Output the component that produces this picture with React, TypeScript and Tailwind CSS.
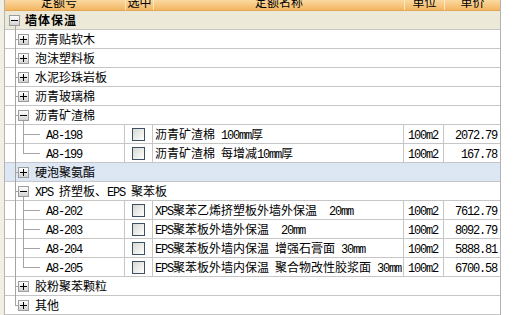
import React from "react";

const ASCII = /^[\x00-\x7f]+$/;

function Txt({ s }: { s: string }) {
  const parts = s.match(/[\x00-\x7f]+|[^\x00-\x7f]+/g) || [];
  return (
    <>
      {parts.map((p, i) =>
        ASCII.test(p) ? (
          <span
            key={i}
            className="font-['Liberation_Mono',monospace] text-[12px] tracking-[-1.2px] whitespace-pre"
          >
            {p}
          </span>
        ) : (
          <span key={i}>{p}</span>
        )
      )}
    </>
  );
}

type Row = {
  kind: "root" | "group" | "leaf";
  label?: string;
  expanded?: boolean;
  code?: string;
  name?: string;
  unit?: string;
  price?: string;
  last?: boolean;
  lastLeaf?: boolean;
  highlight?: boolean;
};

const rows: Row[] = [
  { kind: "root", label: "墙体保温", expanded: true },
  { kind: "group", label: "沥青贴软木" },
  { kind: "group", label: "泡沫塑料板" },
  { kind: "group", label: "水泥珍珠岩板" },
  { kind: "group", label: "沥青玻璃棉" },
  { kind: "group", label: "沥青矿渣棉", expanded: true },
  { kind: "leaf", code: "A8-198", name: "沥青矿渣棉 100mm厚", unit: "100m2", price: "2072.79" },
  { kind: "leaf", code: "A8-199", name: "沥青矿渣棉 每增减10mm厚", unit: "100m2", price: "167.78", lastLeaf: true },
  { kind: "group", label: "硬泡聚氨酯", highlight: true },
  { kind: "group", label: "XPS 挤塑板、EPS 聚苯板", expanded: true },
  { kind: "leaf", code: "A8-202", name: "XPS聚苯乙烯挤塑板外墙外保温  20mm", unit: "100m2", price: "7612.79" },
  { kind: "leaf", code: "A8-203", name: "EPS聚苯板外墙外保温  20mm", unit: "100m2", price: "8092.79" },
  { kind: "leaf", code: "A8-204", name: "EPS聚苯板外墙内保温 增强石膏面 30mm", unit: "100m2", price: "5888.81" },
  { kind: "leaf", code: "A8-205", name: "EPS聚苯板外墙内保温 聚合物改性胶浆面 30mm", unit: "100m2", price: "6700.58", lastLeaf: true },
  { kind: "group", label: "胶粉聚苯颗粒" },
  { kind: "group", label: "其他", last: true },
];

function Toggle({ open, left }: { open: boolean; left: string }) {
  return (
    <div
      className={`absolute top-[4px] ${left} w-[11px] h-[11px] border border-[#9c9c9c] bg-gradient-to-b from-white to-[#d2d2d2]`}
    >
      <div className="absolute left-[1px] top-[4px] w-[7px] h-[1px] bg-black" />
      {!open && <div className="absolute left-[4px] top-[1px] w-[1px] h-[7px] bg-black" />}
    </div>
  );
}

function Check() {
  return (
    <div className="mt-[3px] ml-[7px] w-[13px] h-[13px] border border-[#3b4f66] bg-gradient-to-br from-[#d8d8d2] to-white" />
  );
}

function TreeRow({ r }: { r: Row }) {
  const bg = r.kind === "root" ? "bg-[#ece9d8]" : r.highlight ? "bg-[#dde6f3]" : "bg-white";
  return (
    <div className={`relative flex h-[19px] border-b border-[#c6c6c6] ${bg} leading-[18px] text-[12px] text-black`}>
      {r.kind === "root" && (
        <div className="absolute left-[10px] top-[15px] bottom-[-1px] w-[1px] bg-[#a4a4a4]" />
      )}
      {r.kind !== "root" && !r.last && (
        <div className="absolute left-[10px] top-0 bottom-[-1px] w-[1px] bg-[#a4a4a4]" />
      )}
      {r.last && <div className="absolute left-[10px] top-0 h-[10px] w-[1px] bg-[#a4a4a4]" />}

      {r.kind === "root" && (
        <>
          <Toggle open left="left-[4px]" />
          <div className="pl-[20px] font-bold tracking-[1px]">{r.label}</div>
        </>
      )}

      {r.kind === "group" && (
        <>
          <div className="absolute left-[10px] top-[9px] w-[3px] h-[1px] bg-[#a4a4a4]" />
          <Toggle open={!!r.expanded} left="left-[13px]" />
          {r.expanded && (
            <div className="absolute left-[18px] top-[15px] bottom-[-1px] w-[1px] bg-[#a4a4a4]" />
          )}
          <div className="pl-[30px] whitespace-pre">
            <Txt s={r.label || ""} />
          </div>
        </>
      )}

      {r.kind === "leaf" && (
        <>
          {r.lastLeaf ? (
            <div className="absolute left-[18px] top-0 h-[10px] w-[1px] bg-[#a4a4a4]" />
          ) : (
            <div className="absolute left-[18px] top-0 bottom-[-1px] w-[1px] bg-[#a4a4a4]" />
          )}
          <div className="absolute left-[18px] top-[9px] w-[17px] h-[1px] bg-[#a4a4a4]" />
          <div className="w-[120px] shrink-0 border-r border-[#c6c6c6] pl-[41px]">
            <Txt s={r.code || ""} />
          </div>
          <div className="w-[28px] shrink-0 border-r border-[#c6c6c6]">
            <Check />
          </div>
          <div className="w-[251px] shrink-0 border-r border-[#c6c6c6] pl-[2px] whitespace-pre overflow-hidden">
            <Txt s={r.name || ""} />
          </div>
          <div className="w-[40px] shrink-0 border-r border-[#c6c6c6] pl-[4px]">
            <Txt s={r.unit || ""} />
          </div>
          <div className="flex-1 text-right pr-[3px]">
            <Txt s={r.price || ""} />
          </div>
        </>
      )}
    </div>
  );
}

export default function App() {
  return (
    <div className="w-[522px] h-[315px] overflow-hidden bg-white flex font-['Noto_Sans_CJK_SC',sans-serif]">
      <div className="w-[4px] shrink-0 bg-[#f1efe4]" />
      <div className="w-[497px] shrink-0 border-l border-r border-[#b4b4b4] flex flex-col">
        <div className="h-[11px] shrink-0 flex overflow-hidden bg-gradient-to-b from-[#fbd9a0] to-[#f2b660] border-b border-[#e3a857] text-[12px] leading-[12px] text-black">
          <div className="w-[120px] shrink-0 text-center pr-[12px] mt-[-4px]">定额号</div>
          <div className="w-[28px] shrink-0 text-center border-l border-[#fce6c0] mt-[-4px]">选中</div>
          <div className="w-[251px] shrink-0 text-center border-l border-[#fce6c0] mt-[-4px]">定额名称</div>
          <div className="w-[40px] shrink-0 text-center border-l border-[#fce6c0] mt-[-4px]">单位</div>
          <div className="flex-1 text-center border-l border-[#fce6c0] mt-[-4px]">单价</div>
        </div>
        {rows.map((r, i) => (
          <TreeRow key={i} r={r} />
        ))}
      </div>
      <div className="flex-1 bg-white" />
    </div>
  );
}
